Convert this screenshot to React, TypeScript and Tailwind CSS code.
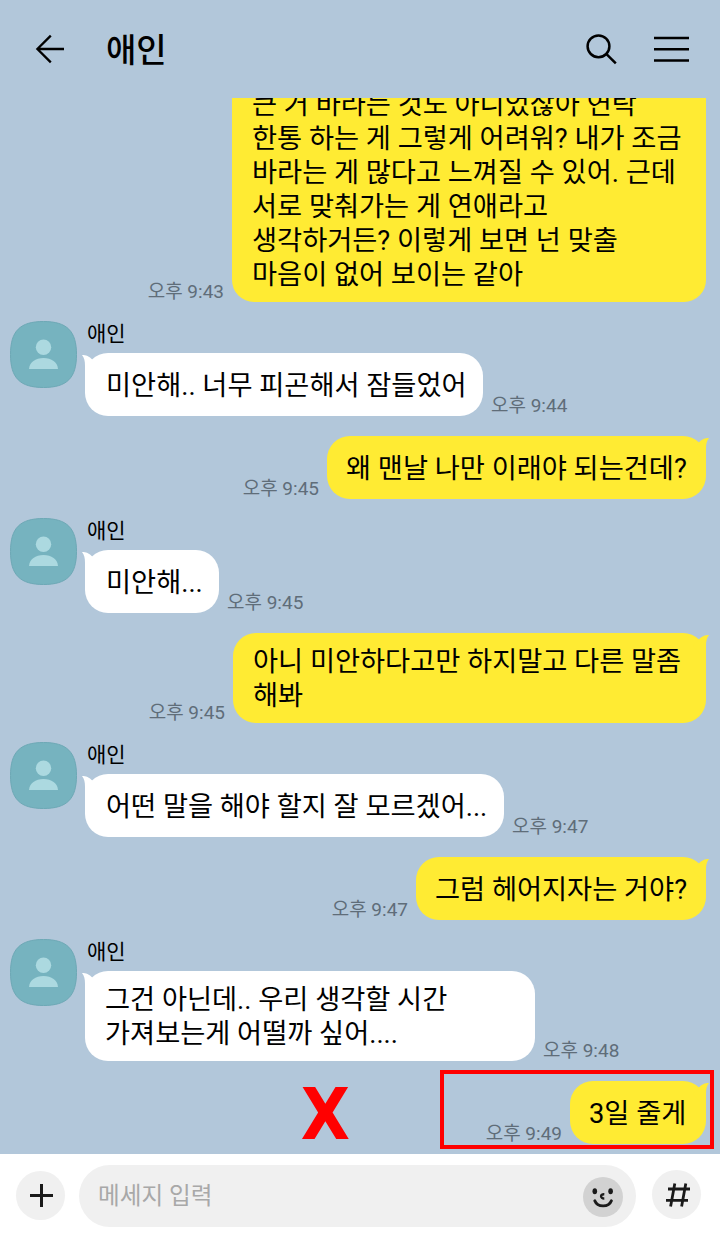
import type { ReactNode } from "react";

interface Message {
  id: number;
  mine: boolean;
  lines: string[];
  time: string;
  width: string;
  cut?: boolean;
}

const MESSAGES: Message[] = [
  {
    id: 1,
    mine: true,
    lines: [
      "큰 거 바라는 것도 아니었잖아 연락",
      "한통 하는 게 그렇게 어려워? 내가 조금",
      "바라는 게 많다고 느껴질 수 있어. 근데",
      "서로 맞춰가는 게 연애라고",
      "생각하거든? 이렇게 보면 넌 맞출",
      "마음이 없어 보이는 같아",
    ],
    time: "오후 9:43",
    width: "w-[474px]",
    cut: true,
  },
  {
    id: 2,
    mine: false,
    lines: ["미안해.. 너무 피곤해서 잠들었어"],
    time: "오후 9:44",
    width: "w-[398px]",
  },
  {
    id: 3,
    mine: true,
    lines: ["왜 맨날 나만 이래야 되는건데?"],
    time: "오후 9:45",
    width: "w-[379px]",
  },
  {
    id: 4,
    mine: false,
    lines: ["미안해..."],
    time: "오후 9:45",
    width: "w-[134px]",
  },
  {
    id: 5,
    mine: true,
    lines: ["아니 미안하다고만 하지말고 다른 말좀", "해봐"],
    time: "오후 9:45",
    width: "w-[473px]",
  },
  {
    id: 6,
    mine: false,
    lines: ["어떤 말을 해야 할지 잘 모르겠어..."],
    time: "오후 9:47",
    width: "w-[419px]",
  },
  {
    id: 7,
    mine: true,
    lines: ["그럼 헤어지자는 거야?"],
    time: "오후 9:47",
    width: "w-[290px]",
  },
  {
    id: 8,
    mine: false,
    lines: ["그건 아닌데.. 우리 생각할 시간", "가져보는게 어떨까 싶어...."],
    time: "오후 9:48",
    width: "w-[450px]",
  },
  {
    id: 9,
    mine: true,
    lines: ["3일 줄게"],
    time: "오후 9:49",
    width: "w-[136px]",
  },
];

const App = () => (
  <div className="flex h-[1238px] w-[720px] flex-col overflow-hidden bg-[#b2c7da] font-[Roboto,'Noto_Sans_CJK_KR',sans-serif] text-black">
    <Header />
    <main className="relative flex min-h-0 flex-1 flex-col justify-end overflow-hidden pb-2.5">
      {MESSAGES.map((message) =>
        message.mine ? (
          <MyMessage key={message.id} message={message} />
        ) : (
          <PartnerMessage key={message.id} message={message} />
        ),
      )}
      <span className="absolute right-[6px] bottom-[5px] h-[79px] w-[274px] border-4 border-[#ff0000]" />
      <span className="absolute bottom-[14px] left-[300px] flex h-[52px] w-[50px] items-center justify-center font-['DejaVu_Sans'] text-[71px] leading-none font-bold text-[#ff0000]">
        <span className="scale-x-[0.9]">X</span>
      </span>
    </main>
    <InputBar />
  </div>
);

export default App;

const Header = () => (
  <header className="flex h-[98px] shrink-0 items-center pr-[31px] pl-[35px]">
    <svg width="30" height="30" viewBox="0 0 30 30" fill="none" stroke="black" strokeWidth="2.3">
      <path d="M15.8 1.6 2.4 15l13.4 13.4M2.4 15H29" />
    </svg>
    <h1 className="ml-[41px] flex-1 pt-[2px] text-[33px] leading-none font-medium">
      애인
    </h1>
    <svg width="32" height="32" viewBox="0 0 32 32" fill="none" stroke="black" strokeWidth="2.5">
      <circle cx="12.500" cy="13.300" r="10.900" />
      <path d="m20.500 21.200 9.300 9.200" />
    </svg>
    <svg
      className="ml-[36px]"
      width="35"
      height="30"
      viewBox="0 0 35 30"
      stroke="black"
      strokeWidth="2.5"
    >
      <path d="M0 4h35M0 15.3h35M0 26.6h35" />
    </svg>
  </header>
);

const MyMessage = ({ message }: { message: Message }) => (
  <div className="mt-5 flex shrink-0 items-end justify-end gap-2 pr-[14px]">
    <Time>{message.time}</Time>
    <div
      className={`relative flex min-h-[63px] shrink-0 flex-col justify-center bg-[#ffeb33] pt-3 pb-[10px] ${message.width} ${
        message.lines.length > 1 ? "pl-5" : "pl-[19px]"
      } ${message.cut ? "rounded-b-[22px]" : "rounded-[23px]"}`}
    >
      <Lines lines={message.lines} />
      {!message.cut && (
        <Tail className="-right-[3px] -scale-x-100 fill-[#ffeb33]" />
      )}
    </div>
  </div>
);

const PartnerMessage = ({ message }: { message: Message }) => (
  <div className="mt-[19px] flex shrink-0 pl-[10px]">
    <Avatar />
    <div className="ml-2 flex flex-col">
      <span className="ml-[2px] flex h-8 items-start text-[21px] leading-[26px]">
        애인
      </span>
      <div className="flex items-end gap-2">
        <div
          className={`relative flex min-h-[63px] shrink-0 flex-col justify-center rounded-[23px] bg-white pt-3 pb-[10px] ${message.width} ${
            message.lines.length > 1 ? "pl-5" : "pl-[21px]"
          }`}
        >
          <Lines lines={message.lines} />
          <Tail className="-left-[3px] fill-white" />
        </div>
        <Time>{message.time}</Time>
      </div>
    </div>
  </div>
);

const Tail = ({ className }: { className: string }) => (
  <svg
    className={`absolute top-[1px] ${className}`}
    width="16"
    height="26"
    viewBox="0 0 16 26"
  >
    <path d="M0 1c4 0 7 1 10.800 5L16 12 3 26V12C3 7 2.300 4 0 1z" />
  </svg>
);

const Lines = ({ lines }: { lines: string[] }) => (
  <>
    {lines.map((line) => (
      <p
        key={line}
        className="text-[27.25px] leading-[34px] whitespace-nowrap"
      >
        {line}
      </p>
    ))}
  </>
);

const Time = ({ children }: { children: ReactNode }) => (
  <span className="-mb-px text-[19px] leading-[22px] whitespace-nowrap text-[#5f6d79]">
    {children}
  </span>
);

const Avatar = () => (
  <svg className="shrink-0" width="67" height="67" viewBox="0 0 67 67">
    <path
      d="M33.500.5C57 .5 66.500 10 66.500 33.500S57 66.500 33.500 66.500.5 57 .5 33.500 10 .5 33.500.5z"
      fill="#76b3bf"
      stroke="#6da8b5"
    />
    <circle cx="33.500" cy="26.300" r="7.700" fill="#acd9e0" />
    <path d="M19 48c.5-7 6.500-11 14.500-11S47.500 41 48 48z" fill="#acd9e0" />
  </svg>
);

const InputBar = () => (
  <footer className="flex h-[84px] shrink-0 items-start bg-white pt-[11px] pl-4">
    <button
      type="button"
      className="mt-[6px] flex h-[49px] w-[49px] items-center justify-center rounded-full bg-[#f0f0f0]"
    >
      <svg
        className="ml-[2px]"
        width="23"
        height="23"
        viewBox="0 0 23 23"
        stroke="#1a1a1a"
        strokeWidth="3"
      >
        <path d="M0 11.500h23M11.500 0v23" />
      </svg>
    </button>
    <div className="ml-[14px] flex h-[62px] w-[557px] items-center justify-between rounded-full bg-[#f0f0f0] pr-[13px] pl-[19px]">
      <span className="pt-[2px] text-[23.600px] leading-none text-[#a8a8a8]">
        메세지 입력
      </span>
      <svg className="mt-[2px]" width="40" height="40" viewBox="0 0 40 40" fill="none">
        <circle cx="20" cy="20" r="20" fill="#d2d2d2" />
        <ellipse cx="11.800" cy="14.200" rx="2.300" ry="3" fill="#1a1a1a" />
        <ellipse cx="27.600" cy="14.200" rx="2.300" ry="3" fill="#1a1a1a" />
        <path
          d="M21.300 17.300c-4.300-.3-4.300 4.300 0 4.200"
          stroke="#1a1a1a"
          strokeWidth="2.400"
        />
        <path
          d="M11.800 23.800c2.600 6.800 14 6.800 16.600 0"
          stroke="#1a1a1a"
          strokeWidth="2.900"
          strokeLinecap="round"
        />
      </svg>
    </div>
    <button
      type="button"
      className="mt-[5px] ml-4 flex h-[49px] w-[49px] items-center justify-center rounded-full bg-[#f0f0f0]"
    >
      <svg
        className="ml-[2px]"
        width="24"
        height="24"
        viewBox="0 0 24 24"
        stroke="#1a1a1a"
        strokeWidth="2.800"
        fill="none"
      >
        <path d="M8.800.5 4.600 23.500M19.800.5 15.600 23.500M2 6h22M0 17.300h22" />
      </svg>
    </button>
  </footer>
);
